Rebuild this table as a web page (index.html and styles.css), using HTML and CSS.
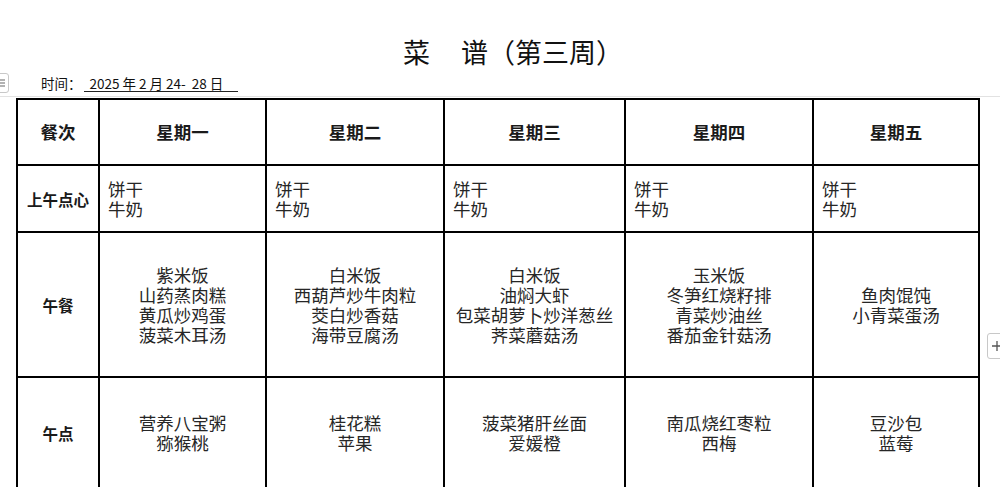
FILE: index.html
```html
<!DOCTYPE html>
<html lang="zh-CN">
<head>
<meta charset="utf-8">
<title>菜谱</title>
<link rel="stylesheet" href="styles.css">
</head>
<body>
<div class="page">
  <h1 class="title"><span class="gap">菜</span>谱（第三周）</h1>
  <div class="date"><span class="label">时间：</span><span class="line">&nbsp;&nbsp;2025 年 2 月 24-&nbsp; 28 日&nbsp;&nbsp;&nbsp;&nbsp;&nbsp;</span></div>
  <div class="rule"></div>
  <table class="menu">
    <colgroup>
      <col class="c0"><col class="c1"><col class="c2"><col class="c3"><col class="c4"><col class="c5">
    </colgroup>
    <tr class="head">
      <th>餐次</th><th>星期一</th><th>星期二</th><th>星期三</th><th>星期四</th><th>星期五</th>
    </tr>
    <tr class="snack">
      <th>上午点心</th>
      <td>饼干<br>牛奶</td><td>饼干<br>牛奶</td><td>饼干<br>牛奶</td><td>饼干<br>牛奶</td><td>饼干<br>牛奶</td>
    </tr>
    <tr class="lunch">
      <th>午餐</th>
      <td>紫米饭<br>山药蒸肉糕<br>黄瓜炒鸡蛋<br>菠菜木耳汤</td>
      <td>白米饭<br>西葫芦炒牛肉粒<br>茭白炒香菇<br>海带豆腐汤</td>
      <td>白米饭<br>油焖大虾<br>包菜胡萝卜炒洋葱丝<br>荠菜蘑菇汤</td>
      <td>玉米饭<br>冬笋红烧籽排<br>青菜炒油丝<br>番茄金针菇汤</td>
      <td>鱼肉馄饨<br>小青菜蛋汤</td>
    </tr>
    <tr class="tea">
      <th>午点</th>
      <td>营养八宝粥<br>猕猴桃</td>
      <td>桂花糕<br>苹果</td>
      <td>菠菜猪肝丝面<br>爱媛橙</td>
      <td>南瓜烧红枣粒<br>西梅</td>
      <td>豆沙包<br>蓝莓</td>
    </tr>
  </table>
</div>
<div class="tool tool-left"><svg width="10" height="10" viewBox="0 0 10 10"><path d="M1 2h8M1 5h8M1 8h8" stroke="#666" stroke-width="1.2"/></svg></div>
<div class="tool tool-right"><svg width="12" height="12" viewBox="0 0 12 12"><path d="M6 1v10M1 6h10" stroke="#555" stroke-width="1.3"/></svg></div>
</body>
</html>
```
FILE: styles.css
```css
html, body {
  margin: 0;
  padding: 0;
  background: #fff;
  overflow: hidden;
}
body {
  font-family: "Noto Sans CJK SC", "Liberation Sans", sans-serif;
  color: #1a1a1a;
}
.page {
  padding: 33px 22px 0 16px;
}
.title {
  margin: 0;
  font-size: 27px;
  font-weight: 400;
  line-height: 37px;
  height: 37px;
  text-align: center;
  padding-left: 32px;
  color: #111;
}
.title .gap {
  margin-right: 31px;
}
.date {
  margin-top: 3px;
  padding-left: 25px;
  font-size: 13.5px;
  line-height: 20px;
  height: 20px;
  color: #111;
}
.date .line {
  display: inline-block;
  margin-left: 2px;
  border-bottom: 1px solid #222;
  line-height: 16px;
  width: 154px;
  white-space: nowrap;
}
.rule {
  height: 0;
  margin: 3px -22px 0 -16px;
  border-top: 1px solid #e2e2e2;
}
.menu {
  margin-top: 1px;
  border-collapse: collapse;
  width: 962px;
  table-layout: fixed;
  border: 2px solid #000;
}
.menu col.c0 { width: 82px; }
.menu col.c1 { width: 167px; }
.menu col.c2 { width: 178px; }
.menu col.c3 { width: 181px; }
.menu col.c4 { width: 188px; }
.menu col.c5 { width: 166px; }
.menu th, .menu td {
  border: 2px solid #000;
  padding: 0;
  font-size: 17.5px;
  line-height: 20px;
  vertical-align: middle;
  color: #262626;
}
.menu th {
  font-weight: 700;
  font-size: 15.5px;
  text-align: center;
  color: #1a1a1a;
}
.menu tr.head th {
  font-size: 17.5px;
}
.menu tr.head { height: 66px; }
.menu tr.snack { height: 67px; }
.menu tr.snack td {
  text-align: left;
  padding-left: 8px;
}
.menu tr.lunch { height: 145px; }
.menu tr.lunch td {
  text-align: center;
}
.menu tr.tea { height: 112px; }
.menu tr.tea td {
  text-align: center;
}
.tool {
  position: absolute;
  box-sizing: border-box;
  background: #fff;
  border: 1px solid #c8c8c8;
  border-radius: 3px;
  display: flex;
  align-items: center;
  justify-content: center;
}
.tool-left {
  left: -8px;
  top: 73px;
  width: 17px;
  height: 20px;
}
.tool-right {
  left: 987px;
  top: 333px;
  width: 22px;
  height: 26px;
  justify-content: flex-start;
  padding-left: 3px;
}
```
